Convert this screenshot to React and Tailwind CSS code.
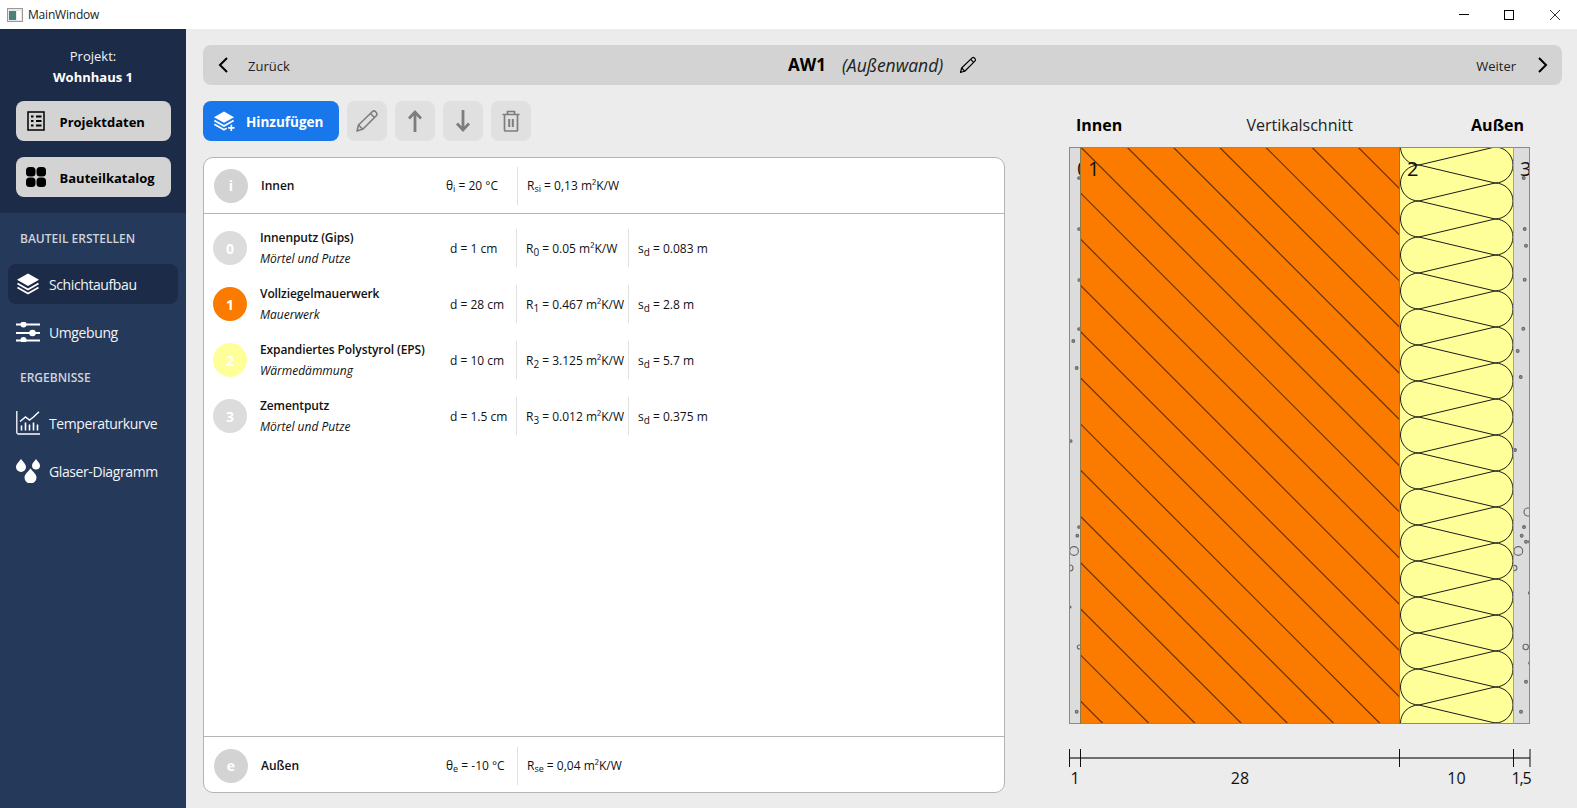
import React from "react";

const LAYERS = [
  { id: "0", name: "Innenputz (Gips)", group: "Mörtel und Putze", d: "d = 1 cm", r: "0", rv: "0.05", sd: "0.083 m", color: "bg-[#dcdcdc]" },
  { id: "1", name: "Vollziegelmauerwerk", group: "Mauerwerk", d: "d = 28 cm", r: "1", rv: "0.467", sd: "2.8 m", color: "bg-[#fb7a00]" },
  { id: "2", name: "Expandiertes Polystyrol (EPS)", group: "Wärmedämmung", d: "d = 10 cm", r: "2", rv: "3.125", sd: "5.7 m", color: "bg-[#ffff99]" },
  { id: "3", name: "Zementputz", group: "Mörtel und Putze", d: "d = 1.5 cm", r: "3", rv: "0.012", sd: "0.375 m", color: "bg-[#dcdcdc]" },
];

const PLASTER_DOTS = [
  [1079, 178, 1.3], [1079, 229, 1.3], [1079.3, 280, 1.3], [1079, 329, 1.3], [1073.3, 341, 1.4], [1076.7, 368, 1.4],
  [1070.7, 441, 1.3], [1079, 527, 1.3], [1077.3, 535.7, 1.3], [1074, 551, 4.4], [1070, 568, 3], [1070, 607, 1],
  [1079.3, 647, 2], [1076.7, 711.7, 1.4],
  [1523.7, 178, 1.4], [1524.7, 229, 1.4], [1526, 245.7, 1.4], [1524.7, 279.7, 1.4], [1523.3, 328.7, 1.4],
  [1517.7, 351, 1.4], [1520.7, 377, 1.4], [1515, 450, 1.4], [1528, 512, 4], [1524, 527, 1.4], [1521.7, 535.7, 1.4],
  [1526, 541.7, 1.4], [1530, 541.7, 1.4], [1518.3, 551, 4.4], [1514.3, 568, 2.6], [1530, 593, 1.5], [1525.7, 647, 2.7],
  [1530, 663, 1.3], [1526, 681.7, 1.4], [1521, 711.7, 1.4],
];

function LayersIcon({ className, plus }) {
  return (
    <svg viewBox="0 0 24 24" className={className} fill="none">
      <path d="M12 1.5 23 7.8 12 14 1 7.8Z" fill="currentColor" />
      <path d="M1.5 11.5 12 17.5l10.5-6" stroke="currentColor" strokeWidth="1.8" />
      <path d={plus ? "M1.5 15.5 12 21.5l3-1.7" : "M1.5 15.5 12 21.5l10.5-6"} stroke="currentColor" strokeWidth="1.8" />
      {plus && <path d="M20 16v7M16.5 19.5h7" stroke="currentColor" strokeWidth="1.8" />}
    </svg>
  );
}

function SlidersIcon() {
  return (
    <svg viewBox="0 0 24 20" className="w-6 h-5 text-white" fill="currentColor">
      <path d="M0 1.5h24v2H0zM0 10h24v2H0zM0 17.5h24v2H0z" />
      <circle cx="7.5" cy="2.5" r="3" />
      <circle cx="16.5" cy="11" r="3.3" />
      <circle cx="7.5" cy="18" r="3" />
    </svg>
  );
}

function ChartIcon() {
  return (
    <svg viewBox="0 0 24 24" className="w-6 h-6 text-white" fill="none" stroke="currentColor">
      <path d="M.8 0v21.5q0 1.5 1.5 1.5H24" strokeWidth="1.3" />
      <path d="M5.5 19.5v-5M9.5 19.5v-8M13.5 19.5v-6M17.5 19.5v-8M21.5 19.5v-6" strokeWidth="1.6" />
      <path d="M4 10.5 9.5 6l4 3 4-3L23 .8" strokeWidth="1.5" />
    </svg>
  );
}

function DropsIcon() {
  return (
    <svg viewBox="0 0 24 24" className="w-6 h-6 text-white" fill="currentColor">
      <path d="M5 0c2 3 5 5 5 8a5 5 0 0 1-10 0c0-3 3-5 5-8Z" />
      <path d="M20 0c1.500 2.500 4 4 4 6.500a4 4 0 0 1-8 0C16 4 18.500 2.500 20 0Z" />
      <path d="M14.500 9.500c2 3 6 5.500 6 9a6 6 0 0 1-12 0c0-3.500 4-6 6-9Z" />
    </svg>
  );
}

function PencilIcon({ className }) {
  return (
    <svg viewBox="0 0 24 24" className={className} fill="none" stroke="currentColor" strokeWidth="1.6" strokeLinejoin="round">
      <path d="M2 22l1.500-6L17.500 2.500q1.500-1.200 3 .2l.8.8q1.400 1.500.2 3L8 20Z" />
      <path d="M3.500 16 8 20.500M15.500 4.500 19.500 8.500" />
    </svg>
  );
}

function ToolButton({ children }) {
  return <button className="w-10 h-10 rounded-lg bg-[#e0e0e0] flex items-center justify-center text-[#7d7d7d]">{children}</button>;
}

function NavItem({ icon, label, active, className }) {
  return (
    <div className={`mx-2 h-10 rounded-lg flex items-center pl-2 gap-[9px] text-[14px] tracking-[-0.4px] text-[#f2f4f7] ${active ? "bg-[#1c2b48]" : ""} ${className || ""}`}>
      <span className="w-6 h-6 flex items-center justify-center">{icon}</span>
      <span>{label}</span>
    </div>
  );
}

function Sep() {
  return <div className="w-px h-[38px] bg-[#e2e2e2] shrink-0" />;
}

function BoundaryRow({ letter, name, theta, thetaSub, rSub, rv, className }) {
  return (
    <div className={`h-[55px] flex items-center pl-[10px] text-[12px] text-[#111] ${className}`}>
      <div className="w-[34px] h-[34px] rounded-full bg-[#d3d3d3] flex items-center justify-center text-white font-bold text-[14px] shrink-0">{letter}</div>
      <div className="ml-[13px] w-[185px] font-semibold">{name}</div>
      <div className="w-[71px]">θ<sub>{thetaSub}</sub> = {theta}</div>
      <Sep />
      <div className="ml-[9px]">R<sub>{rSub}</sub> = {rv} m²K/W</div>
    </div>
  );
}

function Diagram() {
  const hatch = [];
  for (let i = -13; i < 8; i++) {
    const x = 1080.7 + i * 46.2;
    hatch.push(<line key={i} x1={x} y1={147} x2={x + 577} y2={724} />);
  }
  const arcs = [];
  for (let i = -1; i < 17; i++) {
    const yr = 147 + i * 36;
    const yl = 165 + i * 36;
    arcs.push(
      <path
        key={i}
        d={`M1495 ${yr} A18 18 0 0 1 1495 ${yr + 36} M1419 ${yl} A18.5 18 0 0 0 1419 ${yl + 36} M1419 ${yl} L1495 ${yr} M1419 ${yl} L1495 ${yl + 18}`}
      />
    );
  }
  return (
    <svg viewBox="1068 146 464 650" className="w-[464px] h-[650px] block" fontFamily="'Open Sans', sans-serif">
      <defs>
        <clipPath id="wall"><rect x="1069" y="147" width="461" height="577" /></clipPath>
        <clipPath id="brick"><rect x="1080" y="147" width="319" height="577" /></clipPath>
        <clipPath id="eps"><rect x="1400" y="147" width="113" height="577" /></clipPath>
      </defs>
      <g clipPath="url(#wall)">
        <rect x="1069" y="147" width="461" height="577" fill="#dcdcdc" />
        <g fill="#b0b0b0" stroke="#666" strokeWidth="1.1">
          {PLASTER_DOTS.map(([x, y, r]) => <circle key={`${x}-${y}`} cx={x} cy={y} r={r} fill={r < 2 ? "#999" : "none"} />)}
        </g>
        <text x="1077" y="176" fontSize="20" fill="#111">0</text>
        <rect x="1080" y="147" width="320" height="577" fill="#fb7a00" />
        <g clipPath="url(#brick)" stroke="#000" strokeOpacity="0.58" strokeWidth="1.2">{hatch}</g>
        <rect x="1399" y="147" width="114" height="577" fill="#ffff99" />
        <g clipPath="url(#eps)" fill="none" stroke="#1a1a1a" strokeWidth="1">{arcs}</g>
        <text x="1088" y="176" fontSize="20" fill="#111">1</text>
        <text x="1407" y="176" fontSize="20" fill="#111">2</text>
        <text x="1520" y="176" fontSize="20" fill="#111">3</text>
      </g>
      <g fill="none" stroke="#8a8a8a">
        <rect x="1069.5" y="147.5" width="460" height="576" />
      </g>
      <path d="M1080.500 147v577M1399.500 147v577" stroke="#8a7a50" strokeWidth="1" />
      <path d="M1513.500 147v577" stroke="#a8a870" strokeWidth="1" />
      <path d="M1069 758h461" stroke="#444" strokeWidth="1.500" />
      <path d="M1069.500 749v18M1080.500 749v18M1399.500 749v18M1513.500 749v18M1530 749v18" stroke="#111" strokeWidth="1" />
      <g fontSize="16" fill="#111" textAnchor="middle">
        <text x="1075" y="784">1</text>
        <text x="1240" y="784">28</text>
        <text x="1456.500" y="784">10</text>
        <text x="1521" y="784" letterSpacing="-1.2">1,5</text>
      </g>
    </svg>
  );
}

export default function App() {
  return (
    <div className="w-[1577px] h-[808px] flex flex-col overflow-hidden font-['Open_Sans',sans-serif] bg-[#ececec]">
      {/* title bar */}
      <div className="h-[29px] bg-white flex items-center shrink-0 relative">
        <svg viewBox="0 0 16 14" className="w-4 h-[14px] ml-[7px]">
          <rect x="0.500" y="0.500" width="15" height="13" fill="#e8e8e8" stroke="#999" />
          <rect x="2" y="3" width="7" height="9" fill="#4d8078" />
          <rect x="10" y="3" width="4" height="9" fill="#fff" />
        </svg>
        <span className="ml-[5px] text-[12px] tracking-[-0.2px] text-[#222]">MainWindow</span>
        <div className="ml-auto flex items-center mr-[17px]">
          <div className="w-[10px] h-px bg-black" />
          <div className="ml-[35px] w-[10px] h-[10px] border border-black" />
          <svg viewBox="0 0 10 10" className="ml-[36px] w-[10px] h-[10px]" stroke="#000" strokeWidth="0.800"><path d="M0 0l10 10M10 0L0 10" /></svg>
        </div>
      </div>

      <div className="flex-1 flex min-h-0">
        {/* sidebar */}
        <aside className="w-[186px] shrink-0 bg-[#25395a] flex flex-col">
          <div className="h-[184px] bg-[#1c2b48] flex flex-col items-center pt-[17px]">
            <div className="text-[13px] text-[#f2f4f7] leading-5">Projekt:</div>
            <div className="text-[13px] font-bold text-white leading-5 mt-[1px]">Wohnhaus 1</div>
            <button className="mt-[14px] w-[155px] h-10 rounded-lg bg-[#d3d3d3] flex items-center text-[13px] font-bold text-black">
              <svg viewBox="0 0 18 20" className="w-[18px] h-5 ml-[11px]" fill="none" stroke="#000" strokeWidth="1.500">
                <rect x="1" y="1" width="16" height="18" />
                <path d="M4 5.500h2.500M4 10h2.500M4 14.500h2.500M9 5.500h5.500M9 10h5.500M9 14.500h5.500" strokeWidth="2" />
              </svg>
              <span className="ml-[15px] mt-[3px]">Projektdaten</span>
            </button>
            <button className="mt-4 w-[155px] h-10 rounded-lg bg-[#d3d3d3] flex items-center text-[13px] font-bold text-black">
              <svg viewBox="0 0 20 20" className="w-5 h-5 ml-[10px]" fill="#000">
                <rect x="0" y="0" width="9.500" height="9.500" rx="3.500" />
                <rect x="10.500" y="0" width="9.500" height="9.500" rx="3.500" />
                <rect x="0" y="10.500" width="9.500" height="9.500" rx="3.500" />
                <rect x="10.500" y="10.500" width="9.500" height="9.500" rx="3.500" />
              </svg>
              <span className="ml-[14px] mt-[3px]">Bauteilkatalog</span>
            </button>
          </div>
          <div className="pl-5 pt-[18px] text-[12px] font-semibold text-[#cfd3da] leading-[16px]">BAUTEIL ERSTELLEN</div>
          <NavItem className="mt-[17px]" active icon={<LayersIcon className="w-6 h-6 text-white" />} label="Schichtaufbau" />
          <NavItem className="mt-[8px]" icon={<SlidersIcon />} label="Umgebung" />
          <div className="pl-5 mt-[18px] text-[12px] font-semibold text-[#cfd3da] leading-[16px]">ERGEBNISSE</div>
          <NavItem className="mt-[17px]" icon={<ChartIcon />} label="Temperaturkurve" />
          <NavItem className="mt-[8px]" icon={<DropsIcon />} label="Glaser-Diagramm" />
        </aside>

        {/* main */}
        <main className="flex-1 min-w-0 pl-[17px] pr-[15px] pt-4">
          <div className="h-10 rounded-lg bg-[#d3d3d3] flex items-center relative text-[13px] text-[#222]">
            <svg viewBox="0 0 10 16" className="w-[10px] h-4 ml-[15px]" fill="none" stroke="#000" strokeWidth="2"><path d="M9 1 2 8l7 7" /></svg>
            <span className="ml-[20px] mt-[3px]">Zurück</span>
            <div className="absolute left-[585px] top-0 h-10 flex items-center">
              <span className="text-[17px] font-bold text-black">AW1</span>
              <span className="ml-[16px] text-[17.5px] italic text-[#222]">(Außenwand)</span>
              <PencilIcon className="ml-[16px] w-[18px] h-[18px] text-black" />
            </div>
            <span className="ml-auto mt-[3px]">Weiter</span>
            <svg viewBox="0 0 10 16" className="w-[10px] h-4 ml-[22px] mr-[14px]" fill="none" stroke="#000" strokeWidth="2"><path d="m1 1 7 7-7 7" /></svg>
          </div>

          <div className="flex mt-4">
            <div className="w-[802px] shrink-0">
              <div className="flex gap-2 h-10">
                <button className="w-[136px] h-10 rounded-lg bg-[#1877ea] flex items-center text-white text-[13.5px] font-bold">
                  <LayersIcon plus className="w-[22px] h-[22px] ml-[10px]" />
                  <span className="ml-[11px] mt-[3px]">Hinzufügen</span>
                </button>
                <ToolButton><PencilIcon className="w-6 h-6" /></ToolButton>
                <ToolButton>
                  <svg viewBox="0 0 20 24" className="w-5 h-6" fill="none" stroke="currentColor" strokeWidth="2.800"><path d="M10 23V3M4 9.500 10 3l6 6.500" /></svg>
                </ToolButton>
                <ToolButton>
                  <svg viewBox="0 0 20 24" className="w-5 h-6" fill="none" stroke="currentColor" strokeWidth="2.800"><path d="M10 1v20M4 14.500 10 21l6-6.500" /></svg>
                </ToolButton>
                <ToolButton>
                  <svg viewBox="0 0 18 22" className="w-[18px] h-[22px]" fill="none" stroke="currentColor" strokeWidth="1.700">
                    <path d="M.5 4.500h17M5.500 4.500V1.500h7v3M2.500 4.500V20q0 1 1 1h11q1 0 1-1V4.500" />
                    <path d="M7.200 9v8M10.800 9v8" strokeWidth="2" />
                  </svg>
                </ToolButton>
              </div>

              <div className="mt-4 h-[636px] bg-white rounded-[10px] border border-[#b4b4b4] flex flex-col overflow-hidden">
                <BoundaryRow letter="i" name="Innen" theta="20 °C" thetaSub="i" rSub="si" rv="0,13" className="border-b border-[#b4b4b4] h-[56px]" />
                <div className="flex-1 pt-[6px]">
                  {LAYERS.map((l) => (
                    <div key={l.id} className="h-[56px] flex items-center pl-[9px] text-[12px] text-[#111]">
                      <div className={`w-[34px] h-[34px] rounded-full flex items-center justify-center text-white font-bold text-[14px] shrink-0 ${l.color}`}>{l.id}</div>
                      <div className="ml-[13px] w-[190px] shrink-0 flex flex-col gap-[5px]">
                        <div className="font-semibold leading-4 tracking-[-0.1px]">{l.name}</div>
                        <div className="italic leading-4">{l.group}</div>
                      </div>
                      <div className="w-[66px] shrink-0 mt-[2px]">{l.d}</div>
                      <Sep />
                      <div className="w-[111px] pl-[9px] shrink-0 whitespace-nowrap mt-[2px]">R<sub className="text-[10px]">{l.r}</sub> = {l.rv} m²K/W</div>
                      <Sep />
                      <div className="pl-[9px] whitespace-nowrap mt-[2px]">s<sub className="text-[10px]">d</sub> = {l.sd}</div>
                    </div>
                  ))}
                </div>
                <BoundaryRow letter="e" name="Außen" theta="-10 °C" thetaSub="e" rSub="se" rv="0,04" className="border-t border-[#b4b4b4] h-[56px] pt-[2px]" />
              </div>
            </div>

            <div className="ml-[63px] w-[464px] shrink-0">
              <div className="h-[45px] pl-2 pr-[8px] flex items-center justify-between pt-[3px] text-black">
                <span className="text-[16px] font-bold">Innen</span>
                <span className="text-[16px] text-[#222] ml-[6px]">Vertikalschnitt</span>
                <span className="text-[16px] font-bold">Außen</span>
              </div>
              <Diagram />
            </div>
          </div>
        </main>
      </div>
    </div>
  );
}
